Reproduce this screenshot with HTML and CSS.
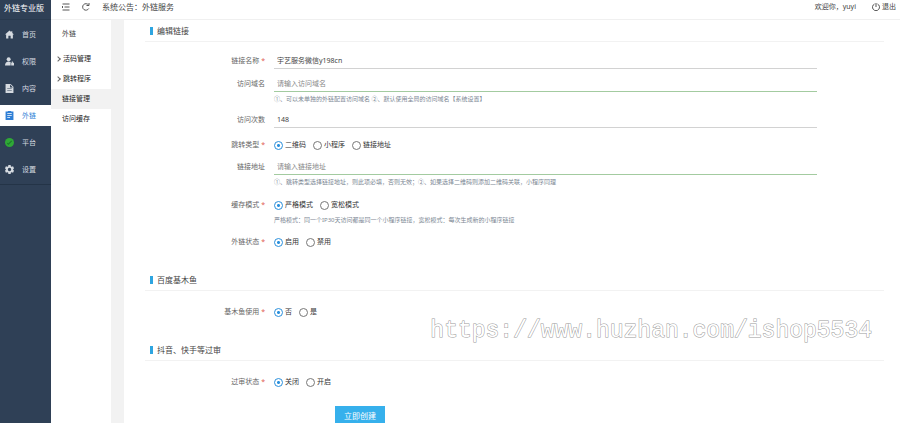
FILE: index.html
```
<!DOCTYPE html>
<html lang="zh-CN">
<head>
    <meta charset="UTF-8">
    <meta name="viewport" content="width=device-width, initial-scale=1.0">
    <title>外链专业版</title>
    <link rel="stylesheet" href="styles.css">
</head>
<body>
    <aside class="sidebar">
        <div class="logo">外链专业版</div>
        <nav class="menu">
            <a href="#"><svg viewBox="0 0 16 16"><path d="M8 1 0 8h2v7h4v-5h4v5h4V8h2l-3-2.700V2h-2v1.600z"/></svg>首页</a>
            <a href="#"><svg viewBox="0 0 16 16"><circle cx="6.500" cy="4" r="3.500"/><path d="M0 15c0-5 3-7 6.500-7 1.500 0 2.500.3 3.500 1v6z"/><path d="M11 10h1V8h2v2h2v5h-5z"/></svg>权限</a>
            <a href="#"><svg viewBox="0 0 16 16"><path fill-rule="evenodd" d="M1 0h9l5 5v11H1zM9 1v5h5zM4 8v1h8V8zM4 11v1h8v-1z"/></svg>内容</a>
            <a href="#" class="active"><svg viewBox="0 0 16 16"><path fill-rule="evenodd" d="M1 1h4V0h6v1h4v15H1zM4 4v1.500h8V4zM4 7.500V9h8V7.500zM4 11v1.500h5V11z"/></svg>外链</a>
            <a href="#"><svg class="green" viewBox="0 0 16 16"><circle cx="8" cy="8" r="8"/><path d="m4 9 2 2 6-6" fill="none" stroke="#1c7a2c" stroke-width="2"/></svg>平台</a>
            <a href="#"><svg viewBox="0 0 16 16"><path fill-rule="evenodd" d="M6 0h4l.5 2.500 1.500.8 2.300-.9 1.700 3.200L14.200 8l1.800 2.400-1.700 3.200-2.300-.9-1.500.8L10 16H6l-.5-2.500-1.500-.8-2.300.9L0 10.400 1.800 8 0 5.600l1.700-3.200 2.300.9 1.500-.8zM8 5a3 3 0 1 0 0 6 3 3 0 0 0 0-6z"/></svg>设置</a>
        </nav>
    </aside>

    <div class="page">
        <header class="topbar">
            <svg viewBox="0 0 16 16"><path d="M1 2h14M5 8h10M1 14h14M1 6v4"/></svg>
            <svg viewBox="0 0 16 16"><path d="M13.500 11A6.500 6.500 0 1 1 13 4M14 0v5H9"/></svg>
            <span class="notice">系统公告：外链服务</span>
            <span class="welcome">欢迎你，yuyi</span>
            <a href="#" class="logout"><svg viewBox="0 0 16 16"><path d="M5 2a7 7 0 1 0 6 0M8 0v8"/></svg>退出</a>
        </header>

        <div class="columns">
            <nav class="submenu">
                <h2>外链</h2>
                <a href="#" class="parent">活码管理</a>
                <a href="#" class="parent">跳转程序</a>
                <a href="#" class="active">链接管理</a>
                <a href="#">访问缓存</a>
            </nav>

            <main>
                <form>
                    <h3>编辑链接</h3>
                    <div class="section">
                        <div class="row">
                            <label class="name" for="title">链接名称<i>*</i></label>
                            <input type="text" id="title" value="宇艺服务微信y198cn">
                        </div>
                        <div class="row">
                            <label class="name" for="domain">访问域名</label>
                            <input type="text" id="domain" class="ok" placeholder="请输入访问域名">
                            <p class="hint">①、可以未单独的外链配置访问域名 ②、默认使用全局的访问域名【系统设置】</p>
                        </div>
                        <div class="row">
                            <label class="name" for="visits">访问次数</label>
                            <input type="text" id="visits" value="148">
                        </div>
                        <div class="row choice" role="radiogroup" aria-labelledby="l-type">
                            <span class="name" id="l-type">跳转类型<i>*</i></span>
                            <label><input type="radio" name="type" checked>二维码</label>
                            <label><input type="radio" name="type">小程序</label>
                            <label><input type="radio" name="type">链接地址</label>
                        </div>
                        <div class="row">
                            <label class="name" for="url">链接地址</label>
                            <input type="text" id="url" class="ok" placeholder="请输入链接地址">
                            <p class="hint">①、跳转类型选择链接地址，则此项必填，否则无效；②、如果选择二维码则添加二维码关联，小程序同理</p>
                        </div>
                        <div class="row choice" role="radiogroup" aria-labelledby="l-cache">
                            <span class="name" id="l-cache">缓存模式<i>*</i></span>
                            <label><input type="radio" name="cache" checked>严格模式</label>
                            <label><input type="radio" name="cache">宽松模式</label>
                            <p class="hint">严格模式：同一个IP30天访问都是同一个小程序链接，宽松模式：每次生成新的小程序链接</p>
                        </div>
                        <div class="row choice" role="radiogroup" aria-labelledby="l-state">
                            <span class="name" id="l-state">外链状态<i>*</i></span>
                            <label><input type="radio" name="state" checked>启用</label>
                            <label><input type="radio" name="state">禁用</label>
                        </div>
                    </div>

                    <h3>百度基木鱼</h3>
                    <div class="section">
                        <div class="row choice" role="radiogroup" aria-labelledby="l-jmy">
                            <span class="name" id="l-jmy">基木鱼使用<i>*</i></span>
                            <label><input type="radio" name="jmy" checked>否</label>
                            <label><input type="radio" name="jmy">是</label>
                        </div>
                    </div>

                    <h3>抖音、快手等过审</h3>
                    <div class="section">
                        <div class="row choice" role="radiogroup" aria-labelledby="l-audit">
                            <span class="name" id="l-audit">过审状态<i>*</i></span>
                            <label><input type="radio" name="audit" checked>关闭</label>
                            <label><input type="radio" name="audit">开启</label>
                        </div>
                    </div>
                    <button type="button" class="submit">立即创建</button>
                </form>
            </main>
        </div>
    </div>
    <div class="watermark">https://www.huzhan.com/ishop5534</div>
</body>
</html>
```
FILE: styles.css
```
* {
    box-sizing: border-box;
}

body {
    margin: 0;
    height: 100vh;
    display: flex;
    overflow: hidden;
    position: relative;
    font-family: "Noto Sans", "Noto Sans CJK SC", sans-serif;
    font-size: 7px;
    line-height: 16px;
    color: #444;
    background: #fff;
}

a {
    color: inherit;
    text-decoration: none;
}

h2, h3, p {
    margin: 0;
    font-weight: normal;
}

/* left menu */
.sidebar {
    width: 51px;
    flex-shrink: 0;
    background: #2f4056;
    color: #d5dae0;
}

.logo {
    height: 20px;
    padding-left: 4px;
    font-size: 8px;
    color: #fff;
    white-space: nowrap;
    border-bottom: 1px solid #293a4e;
}

.menu {
    display: flex;
    flex-direction: column;
    gap: 6px;
    padding: 4px 0;
    border-bottom: 1px solid #243447;
}

.menu a {
    display: flex;
    align-items: center;
    gap: 8px;
    height: 21px;
    padding-left: 5px;
}

.menu svg {
    width: 9px;
    height: 9px;
    fill: #d5dae0;
}

.menu .active {
    background: #fff;
    color: #2f7fd6;
}

.menu .active svg {
    fill: #2f7fd6;
}

.menu .green {
    fill: #2fa836;
}

/* top bar */
.page {
    flex: 1;
    min-width: 0;
    display: flex;
    flex-direction: column;
}

.topbar {
    display: flex;
    align-items: center;
    height: 20px;
    flex-shrink: 0;
    padding: 0 4px 6px 11px;
    border-bottom: 1px solid #f0f0f0;
}

.topbar svg {
    width: 8px;
    height: 8px;
    margin-right: 12px;
    fill: none;
    stroke: #555;
    stroke-width: 2;
}

.notice {
    font-size: 8px;
}

.welcome {
    margin-left: auto;
}

.logout {
    display: flex;
    align-items: center;
    margin-left: 16px;
}

.topbar .logout svg {
    margin-right: 2px;
}

.columns {
    flex: 1;
    min-height: 0;
    display: flex;
}

/* second menu */
.submenu {
    width: 60px;
    flex-shrink: 0;
}

.submenu h2 {
    height: 29px;
    padding-left: 11px;
    font-size: 7px;
    line-height: 28px;
}

.submenu a {
    display: flex;
    align-items: center;
    height: 20px;
    padding-left: 11px;
    color: #222;
}

.submenu .active {
    background: #f2f2f2;
}

.submenu .parent {
    padding-left: 5px;
}

.submenu .parent::before {
    content: "";
    width: 3px;
    height: 3px;
    margin-right: 3px;
    border: solid #666;
    border-width: 1px 1px 0 0;
    transform: rotate(45deg);
}

/* form */
main {
    flex: 1;
    min-width: 0;
    padding-top: 1px;
    border-left: 13px solid #f2f2f2;
}

h3 {
    display: flex;
    align-items: center;
    height: 21px;
    margin: 0 16px 0 21px;
    padding-left: 5px;
    font-size: 8px;
    border-bottom: 1px solid #f2f2f2;
}

h3::before {
    content: "";
    width: 3px;
    height: 8px;
    margin-right: 4px;
    background: #2ea5e0;
}

.section {
    display: flex;
    flex-direction: column;
    padding-top: 11px;
}

.section + h3 {
    margin-top: 14px;
}

.row {
    display: flex;
    flex-wrap: wrap;
    margin-bottom: 7px;
}

.name {
    width: 141px;
    margin-right: 9px;
    text-align: right;
    color: #666;
}

.name i {
    margin-left: 2px;
    font-style: normal;
    color: #e05a50;
}

input[type="text"] {
    width: 70%;
    height: 16px;
    padding: 0 3px;
    border: 0;
    border-bottom: 1px solid #d2d2d2;
    outline: 0;
    background: none;
    font: inherit;
    color: #444;
}

input[type="text"].ok {
    border-bottom-color: #a3cba0;
}

input::placeholder {
    color: #888;
}

.hint {
    width: 100%;
    padding: 1px 0 0 150px;
    font-size: 6px;
    line-height: 12px;
    color: #7c8794;
}

.choice {
    margin: 2px 0 6px;
}

.choice label {
    display: flex;
    align-items: center;
    margin-right: 7px;
    color: #333;
}

input[type="radio"] {
    appearance: none;
    width: 9px;
    height: 9px;
    margin: 0 2px 0 0;
    border: 1px solid #777;
    border-radius: 50%;
}

input[type="radio"]:checked {
    border-color: #2b90dc;
    background: radial-gradient(circle, #2b90dc 1px, #fff 2px);
}

.submit {
    display: block;
    width: 50px;
    height: 19px;
    margin: 10px 0 0 211px;
    padding: 0;
    border: 0;
    background: #36b0ec;
    color: #fff;
    font: inherit;
    font-size: 8px;
}

/* site mark over the page */
.watermark {
    position: absolute;
    right: 28px;
    bottom: 78px;
    font-family: "Liberation Mono", monospace;
    font-size: 23px;
    line-height: 28px;
    color: #fff;
    -webkit-text-stroke: 1px #999;
    paint-order: stroke;
    pointer-events: none;
}
```
